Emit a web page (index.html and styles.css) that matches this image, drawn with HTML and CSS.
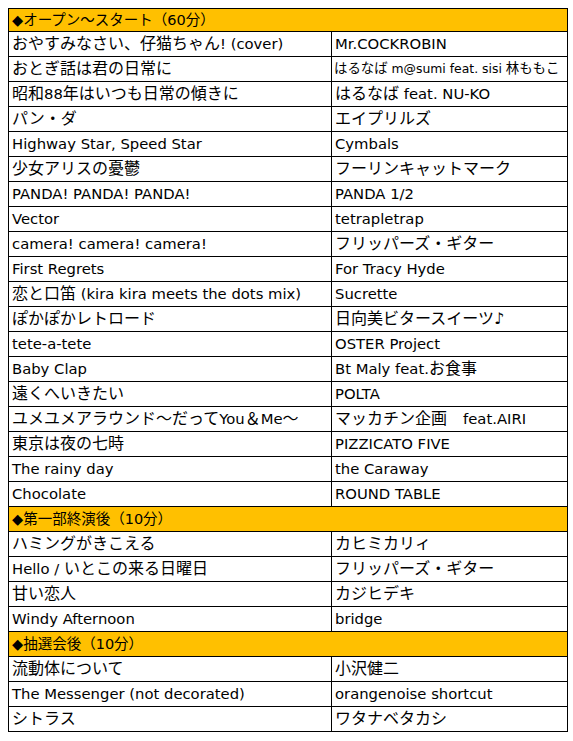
FILE: index.html
```html
<!DOCTYPE html>
<html lang="ja">
<head>
<meta charset="utf-8">
<link rel="stylesheet" href="styles.css">
</head>
<body>
<table class="setlist">
  <colgroup><col class="c-title"><col class="c-artist"></colgroup>
  <tbody>
    <tr class="section first"><td colspan="2">◆オープン～スタート（60分）</td></tr>
    <tr><td><span class="ja">おやすみなさい、仔猫ちゃん</span>! (cover)</td><td>Mr.COCKROBIN</td></tr>
    <tr><td class="ja">おとぎ話は君の日常に</td><td class="small"><span class="ja">はるなば</span> m@sumi feat. sisi <span class="ja">林ももこ</span></td></tr>
    <tr><td><span class="ja">昭和</span>88<span class="ja">年はいつも日常の傾きに</span></td><td><span class="ja">はるなば</span> feat. NU-KO</td></tr>
    <tr><td class="ja">パン・ダ</td><td class="ja">エイプリルズ</td></tr>
    <tr><td>Highway Star, Speed Star</td><td>Cymbals</td></tr>
    <tr><td class="ja">少女アリスの憂鬱</td><td class="ja">フーリンキャットマーク</td></tr>
    <tr><td>PANDA! PANDA! PANDA!</td><td>PANDA 1/2</td></tr>
    <tr><td>Vector</td><td>tetrapletrap</td></tr>
    <tr><td>camera! camera! camera!</td><td class="ja">フリッパーズ・ギター</td></tr>
    <tr><td>First Regrets</td><td>For Tracy Hyde</td></tr>
    <tr><td><span class="ja">恋と口笛</span> (kira kira meets the dots mix)</td><td>Sucrette</td></tr>
    <tr><td class="ja">ぽかぽかレトロード</td><td class="ja">日向美ビタースイーツ♪</td></tr>
    <tr><td>tete-a-tete</td><td>OSTER Project</td></tr>
    <tr><td>Baby Clap</td><td>Bt Maly feat.<span class="ja">お食事</span></td></tr>
    <tr><td class="ja">遠くへいきたい</td><td>POLTA</td></tr>
    <tr><td><span class="ja">ユメユメアラウンド～だって</span>You<span class="ja">＆</span>Me<span class="ja">～</span></td><td><span class="ja">マッカチン企画　</span>feat.AIRI</td></tr>
    <tr><td class="ja">東京は夜の七時</td><td>PIZZICATO FIVE</td></tr>
    <tr><td>The rainy day</td><td>the Caraway</td></tr>
    <tr><td>Chocolate</td><td>ROUND TABLE</td></tr>
    <tr class="section"><td colspan="2">◆第一部終演後（10分）</td></tr>
    <tr><td class="ja">ハミングがきこえる</td><td class="ja">カヒミカリィ</td></tr>
    <tr><td>Hello / <span class="ja">いとこの来る日曜日</span></td><td class="ja">フリッパーズ・ギター</td></tr>
    <tr><td class="ja">甘い恋人</td><td class="ja">カジヒデキ</td></tr>
    <tr><td>Windy Afternoon</td><td>bridge</td></tr>
    <tr class="section"><td colspan="2">◆抽選会後（10分）</td></tr>
    <tr><td class="ja">流動体について</td><td class="ja">小沢健二</td></tr>
    <tr><td>The Messenger (not decorated)</td><td>orangenoise shortcut</td></tr>
    <tr><td class="ja">シトラス</td><td class="ja">ワタナベタカシ</td></tr>
  </tbody>
</table>
</body>
</html>
```
FILE: styles.css
```css
html, body {
  margin: 0;
  background: #fff;
}
body {
  padding: 8px;
}
.setlist {
  border-collapse: collapse;
  width: 559px;
  table-layout: fixed;
  font-family: "DejaVu Sans", "Noto Sans CJK JP", sans-serif;
  font-size: 14.8px;
  color: #000;
}
.c-title { width: 323px; }
.c-artist { width: 236px; }
.setlist td {
  border: 1px solid #000;
  height: 24px;
  padding: 0 3px;
  white-space: nowrap;
  overflow: hidden;
  line-height: 20px;
  vertical-align: middle;
}
.setlist .ja {
  font-size: 16px;
}
.setlist td.small {
  font-size: 12.4px;
  padding-left: 2px;
  padding-right: 0;
}
.setlist td.small .ja {
  font-size: 13.4px;
}
.section td {
  background: #ffc000;
  font-size: 14.5px;
}
.section.first td {
  height: 22px;
}
```
